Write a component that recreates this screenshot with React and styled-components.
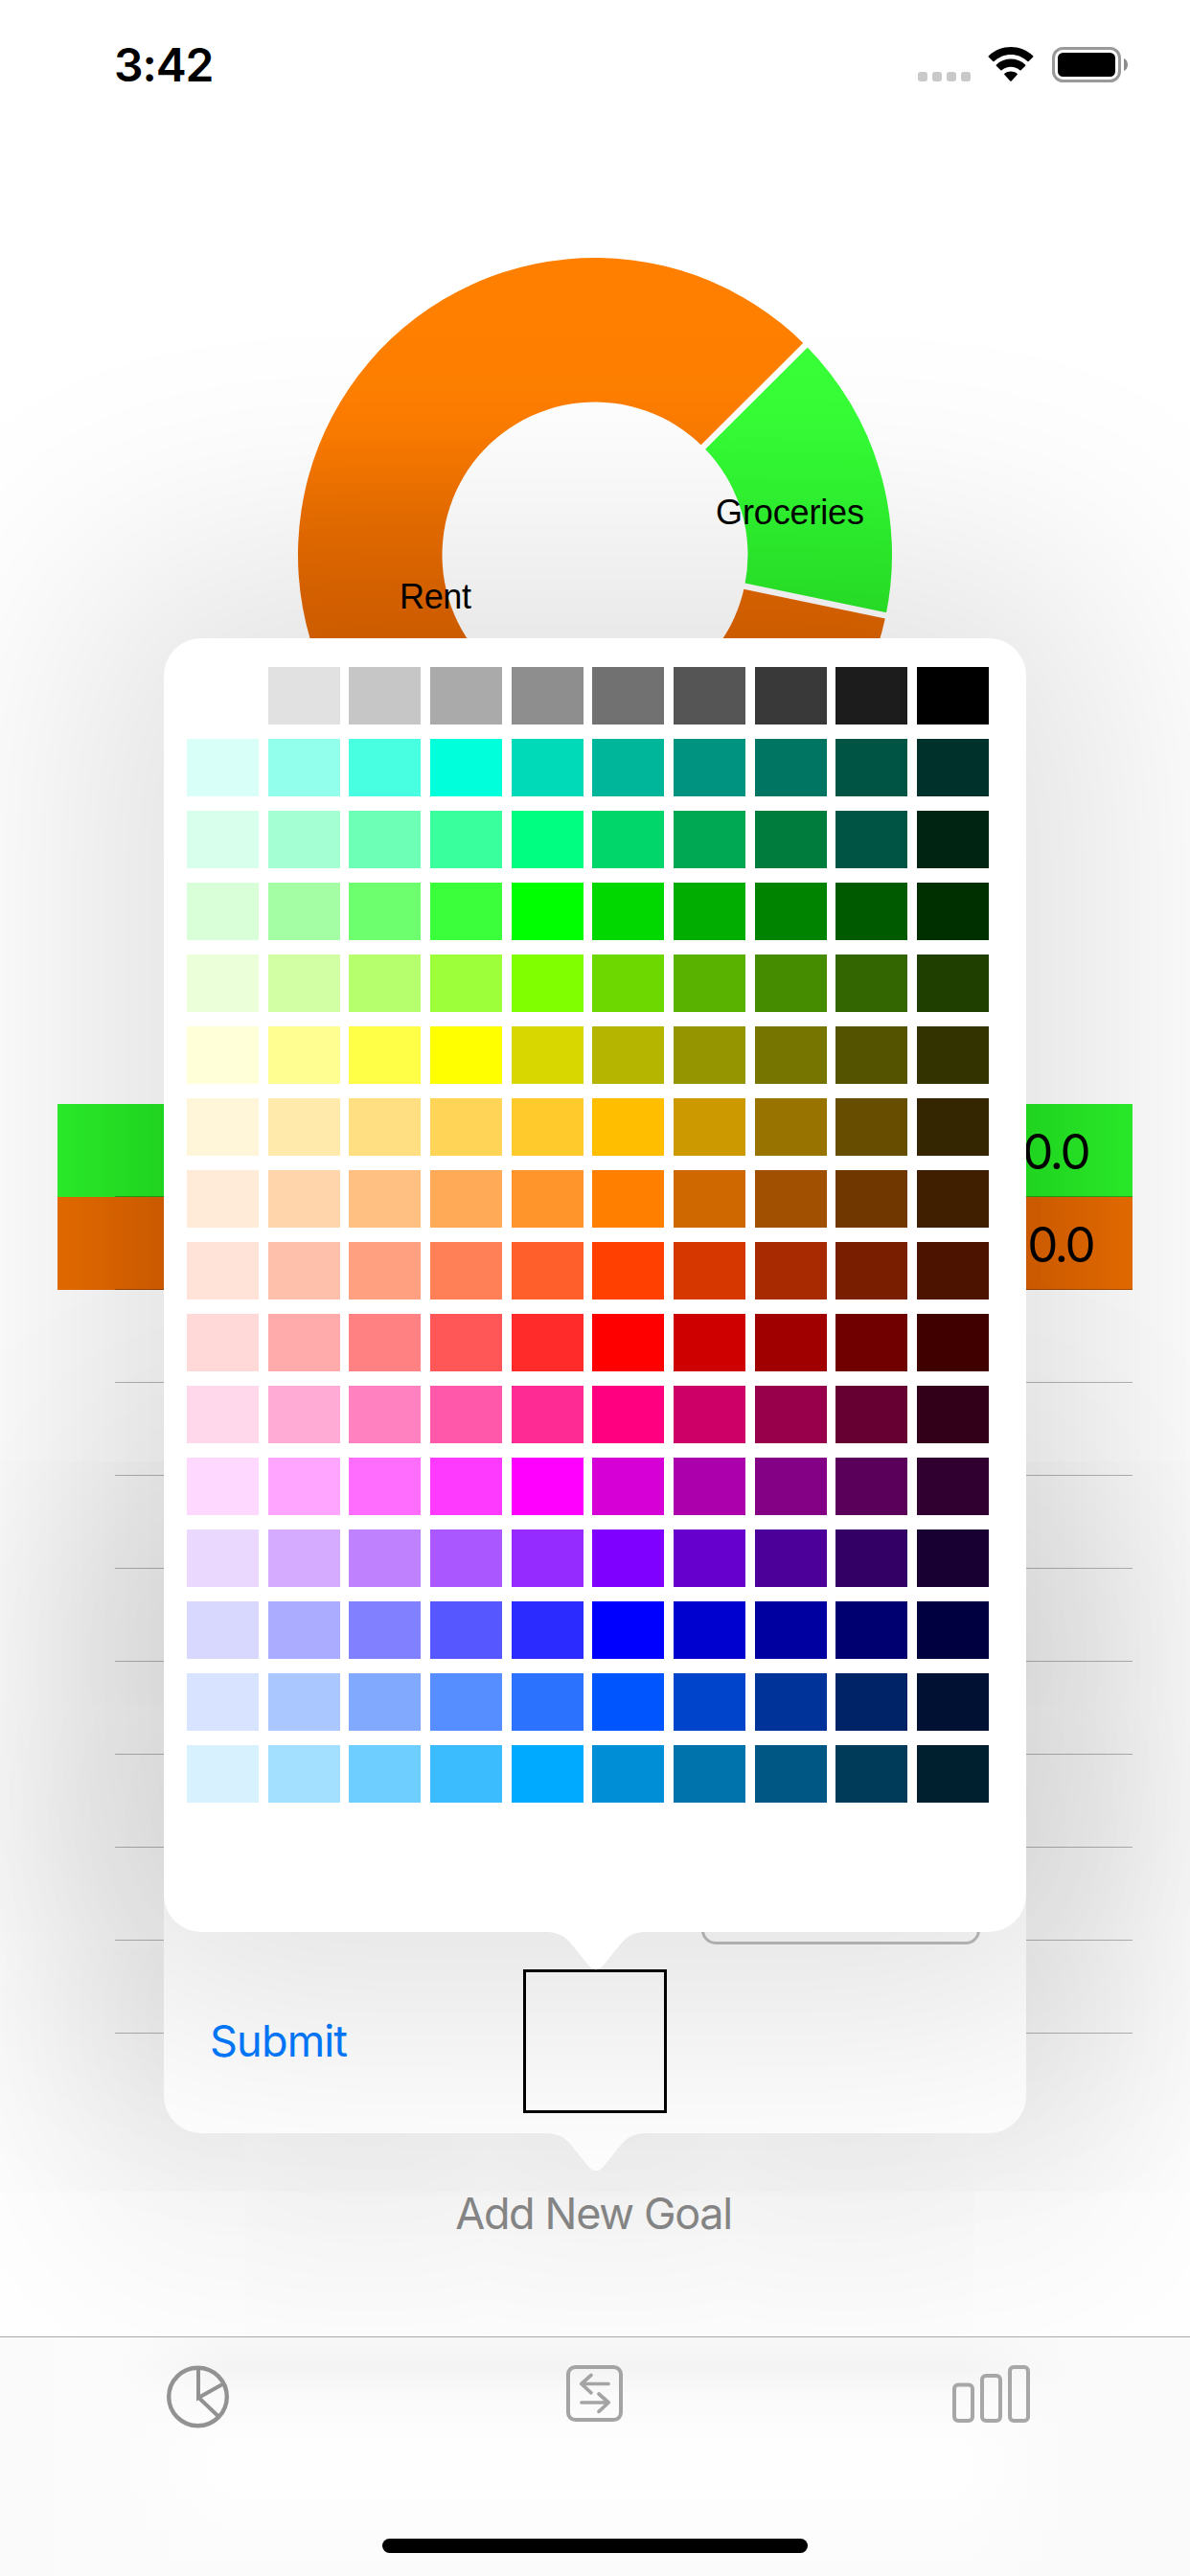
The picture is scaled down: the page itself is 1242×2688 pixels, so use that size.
import React from "react";
import styled, { createGlobalStyle } from "styled-components";

const GlobalStyle = createGlobalStyle`
  *, *::before, *::after { box-sizing: border-box; }
  html, body { margin: 0; padding: 0; background: #fff; }
`;

const Screen = styled.main`
  position: relative;
  display: flex;
  flex-direction: column;
  width: 1242px;
  height: 2688px;
  overflow: hidden;
  background: #fff;
  font-family: Inter, "Liberation Sans", sans-serif;
`;

/* Status bar */

const StatusBar = styled.header`
  display: flex;
  justify-content: space-between;
  height: 132px;
  padding: 0 65px 0 119px;
`;

const Clock = styled.time`
  padding-top: 38px;
  font-size: 48px;
  font-weight: 600;
  line-height: 60px;
  letter-spacing: -1.1px;
  color: #000;
`;

const StatusIcons = styled.div`
  display: flex;
  align-items: flex-start;
  padding-top: 49px;
`;

const SignalDots = styled.div`
  display: flex;
  gap: 5px;
  margin: 26px 18px 0 0;
`;

const Dot = styled.i`
  width: 10px;
  height: 10px;
  border-radius: 3px;
  background: #c9c9c9;
`;

const WifiSvg = styled.svg`
  display: block;
  width: 48px;
  height: 37px;
  margin-right: 19px;
`;

const BatterySvg = styled.svg`
  display: block;
  width: 79px;
  height: 37px;
`;

/* Chart */

const ChartArea = styled.section`
  height: 1020px;
  padding: 127px 0 0 301px;
`;

const ChartSvg = styled.svg`
  display: block;
  width: 640px;
  height: 640px;
`;

const SliceLabel = styled.text`
  font-family: "Liberation Sans", Arial, sans-serif;
  font-size: 36px;
  fill: #000;
`;

/* Goals table */

const Table = styled.ul`
  width: 1122px;
  margin: 0 0 0 60px;
  padding: 0;
  list-style: none;
`;

const Row = styled.li`
  display: flex;
  flex-direction: column;
  justify-content: flex-end;
  height: 97px;
  background: ${(p) =>
    p.$edge
      ? `linear-gradient(90deg, ${p.$edge} 0, ${p.$core} 111px, ${p.$core} calc(100% - 111px), ${p.$edge} 100%)`
      : "none"};
`;

const Amount = styled.span`
  align-self: flex-end;
  height: 96px;
  padding-right: ${(p) => p.$inset}px;
  font-size: 51px;
  line-height: 99px;
  letter-spacing: -2.6px;
  color: #000;
`;

const Separator = styled.span`
  height: 1px;
  margin-left: 60px;
  background: rgba(0, 0, 0, 0.28);
`;

const AddGoal = styled.button`
  align-self: center;
  margin: 158px 0 0 -3px;
  padding: 0;
  border: 0;
  background: none;
  font: inherit;
  font-size: 45px;
  line-height: 60px;
  letter-spacing: -1.35px;
  white-space: nowrap;
  color: #8b8b8b;
`;

/* Popovers */

const Popover = styled.section`
  position: absolute;
  left: 171px;
  top: ${(p) => p.$top}px;
  width: 900px;
  height: ${(p) => p.$height}px;
  border-radius: 39px;
  background: #fff;
  box-shadow: 0 0 260px 90px rgba(4, 4, 0, 0.115);
`;

const PopoverArrow = styled.svg`
  position: absolute;
  left: 399px;
  top: calc(100% - 0.5px);
  width: 104px;
  height: 40px;
`;

const Form = styled.div`
  display: flex;
  flex-direction: column;
  height: 100%;
  padding: 301px 48px 21px 48px;
`;

const AmountField = styled.input`
  align-self: flex-end;
  width: 291px;
  height: 102px;
  border: 3px solid #bebebe;
  border-radius: 15px;
  background: transparent;
`;

const FormActions = styled.div`
  display: grid;
  grid-template-columns: 327px 150px 1fr;
  align-items: center;
  height: 150px;
  margin-top: 26px;
`;

const SubmitButton = styled.button`
  justify-self: start;
  padding: 0;
  border: 0;
  background: none;
  font: inherit;
  font-size: 45px;
  line-height: 60px;
  letter-spacing: -0.8px;
  color: #007aff;
`;

const ColorWell = styled.div`
  width: 150px;
  height: 150px;
  border: 3px solid #000;
`;

const Palette = styled.div`
  display: grid;
  grid-template-columns: repeat(10, 75px);
  grid-auto-rows: 60px;
  gap: 15px 9.6667px;
  padding: 30px 24px;
`;

const Swatch = styled.div`
  background: ${(p) => p.$color};
`;

/* Tab bar */

const TabBar = styled.nav`
  position: absolute;
  left: 0;
  right: 0;
  bottom: 0;
  height: 250px;
  display: flex;
  flex-direction: column;
  border-top: 1px solid #a9a9a9;
  background:
    linear-gradient(90deg, #fafafa 0, #fbfbfb 120px, rgba(252, 252, 252, 0) 240px, rgba(252, 252, 252, 0) 1000px, #fafafa 1120px, #fafafa 100%),
    linear-gradient(180deg, #f7f7f7 0, #f4f4f4 33px, #fafafa 60px, #fefefe 110px, #fefefe 150px, #fbfbfb 100%);
`;

const Tabs = styled.div`
  display: grid;
  grid-template-columns: repeat(3, 414px);
  height: 147px;
  padding-top: 28px;
`;

const Tab = styled.a`
  display: flex;
  justify-content: center;
`;

const TabIcon = styled.svg`
  display: block;
  width: 86px;
  height: 68px;
  fill: none;
  stroke: ${(p) => p.$tone};
`;

const HomeIndicator = styled.div`
  width: 444px;
  height: 15px;
  margin: 63px 0 0 399px;
  border-radius: 7.5px;
  background: #000;
`;

const PALETTE = [
  "ffffff e1e1e1 c6c6c6 aaaaaa 8e8e8e 717171 555555 393939 1c1c1c 000000",
  "d8fff8 91ffec 48ffe2 00ffdb 00dab8 00b69a 009480 007561 005444 00312a",
  "d8ffeb a4ffd2 6dffb6 3aff9d 00ff80 00d66a 00a854 007d3d 005444 002412",
  "d8ffd8 a4ffa4 6dff6d 3aff3a 00ff00 00d800 00ad00 008400 005a00 003000",
  "ebffd8 d2ffa4 b6ff6d 9dff3a 80ff00 6cd800 59b200 458c00 336600 1f3f00",
  "ffffd8 ffff91 ffff48 ffff00 d8d800 b5b500 959500 757500 545400 333300",
  "fff5d8 ffeaab ffdf81 ffd457 ffca2b ffbf00 cc9900 997300 664d00 332600",
  "ffebd8 ffd5ab ffc081 ffaa57 ff952b ff8000 d06800 a05000 703800 401f00",
  "ffe2d8 ffc0ab ffa081 ff8057 ff602b ff4000 d63600 a82a00 7a1e00 4b1300",
  "ffd8d8 ffabab ff8181 ff5757 ff2b2b ff0000 cf0000 a00000 700000 400000",
  "ffd8eb ffabd5 ff81c0 ff57aa ff2b95 ff0080 cc0066 99004c 660033 330019",
  "ffd8ff ffa4ff ff6dff ff3aff ff00ff d600d6 ad00ad 840084 5a005a 300030",
  "ebd8ff d5abff c081ff aa57ff 952bff 8000ff 6600cc 4c0099 330066 190033",
  "d8d8ff ababff 8181ff 5757ff 2b2bff 0000ff 0000cf 0000a0 000070 000040",
  "d8e4ff abc7ff 81aaff 578eff 2b72ff 0055ff 0044cc 003399 002266 001133",
  "d8f1ff a3dfff 6dceff 3abcff 00aaff 008ed7 0073ad 005784 003c5a 002030",
].flatMap((row) => row.split(" "));

const CX = 320;
const CY = 320;
const OUTER = 310;
const INNER = 159.5;

const at = (r, deg) => {
  const a = (deg * Math.PI) / 180;
  return `${(CX + r * Math.cos(a)).toFixed(2)} ${(CY + r * Math.sin(a)).toFixed(2)}`;
};

const slice = (from, to) => {
  const large = to - from > 180 ? 1 : 0;
  return `M${at(OUTER, from)} A${OUTER} ${OUTER} 0 ${large} 1 ${at(OUTER, to)} L${at(INNER, to)} A${INNER} ${INNER} 0 ${large} 0 ${at(INNER, from)} Z`;
};

const SLICE_START = -44.9;
const SLICE_END = 11.8;

function Donut() {
  return (
    <ChartSvg viewBox="0 0 640 640">
      <defs>
        <linearGradient id="rent" gradientUnits="userSpaceOnUse" x1="0" y1="10" x2="0" y2="410">
          <stop offset="0" stopColor="#ff8000" />
          <stop offset="0.32" stopColor="#ff8000" />
          <stop offset="0.45" stopColor="#fd7c00" />
          <stop offset="0.67" stopColor="#ec6f00" />
          <stop offset="0.87" stopColor="#e36700" />
          <stop offset="1" stopColor="#e06500" />
        </linearGradient>
        <linearGradient id="groceries" gradientUnits="userSpaceOnUse" x1="0" y1="10" x2="0" y2="410">
          <stop offset="0" stopColor="#3aff3a" />
          <stop offset="0.4" stopColor="#37ff37" />
          <stop offset="0.67" stopColor="#2ff630" />
          <stop offset="1" stopColor="#28e826" />
        </linearGradient>
      </defs>
      <path d={slice(SLICE_END, 360 + SLICE_START)} fill="url(#rent)" />
      <path d={slice(SLICE_START, SLICE_END)} fill="url(#groceries)" />
      {[SLICE_START, SLICE_END].map((deg) => (
        <path key={deg} d={`M${at(INNER - 4, deg)} L${at(OUTER + 4, deg)}`} stroke="#fff" strokeWidth="6.4" />
      ))}
      <SliceLabel x="446" y="288" textLength="155">Groceries</SliceLabel>
      <SliceLabel x="116" y="376" textLength="75">Rent</SliceLabel>
    </ChartSvg>
  );
}

function Arrow() {
  return (
    <PopoverArrow viewBox="0 0 104 40">
      <path
        d="M0 0 C12 0.4 18 3.5 24 10 C31 18 37 26 42 32 C48 41.5 56 41.5 62 32 C67 26 73 18 80 10 C86 3.5 92 0.4 104 0 Z"
        fill="#fff"
      />
    </PopoverArrow>
  );
}

function Wifi() {
  return (
    <WifiSvg viewBox="0 0 48 37">
      <path d="M24 7.9 C30.5 7.9 36.7 10.5 41.4 15 Q42 15.6 42.6 15 L47.2 10.5 Q47.8 9.8 47.1 9.2 C34 -3 14 -3 0.9 9.2 Q0.2 9.8 0.8 10.5 L5.4 15 Q6 15.6 6.6 15 C11.3 10.5 17.5 7.9 24 7.9 Z" />
      <path d="M24 20.7 C27.5 20.7 30.8 22 33.4 24.2 Q34 24.8 34.6 24.2 L39.2 19.7 Q39.8 19 39.1 18.4 C30.6 10.6 17.4 10.6 8.9 18.4 Q8.2 19 8.8 19.7 L13.4 24.2 Q14 24.8 14.6 24.2 C17.2 22 20.5 20.7 24 20.7 Z" />
      <path d="M30.6 27.7 Q31.2 28.4 30.6 29.1 L24.7 35.4 Q24 36.1 23.3 35.4 L17.4 29.1 Q16.8 28.4 17.4 27.7 C21.2 24.8 26.8 24.8 30.6 27.7 Z" />
    </WifiSvg>
  );
}

function Battery() {
  return (
    <BatterySvg viewBox="0 0 79 37">
      <rect x="1.5" y="1.5" width="69" height="34" rx="10" fill="none" stroke="#999" strokeWidth="3" />
      <rect x="6" y="6" width="60" height="25" rx="5.5" fill="#000" />
      <path d="M75 12 C77.6 13.2 79 15.6 79 18.5 C79 21.4 77.6 23.8 75 25 Z" fill="#8c8c8c" />
    </BatterySvg>
  );
}

function PieTabIcon() {
  return (
    <TabIcon viewBox="0 0 86 68" $tone="#929292" strokeWidth="4.4">
      <circle cx="42.5" cy="34" r="30.3" />
      <path d="M43 4 V35 L69 20.5 M43 34.5 L64 54.5" strokeWidth="4" />
    </TabIcon>
  );
}

function TransferTabIcon() {
  return (
    <TabIcon viewBox="0 0 86 68" $tone="#a4a4a4" strokeWidth="4" strokeLinecap="round" strokeLinejoin="round">
      <rect x="15" y="3" width="55" height="55" rx="7.5" />
      <path d="M57 20.5 H28.8 M39 11.4 L28.8 20.5 L39 29.8 M29 40 H57.2 M47 31 L57.2 40 L47 49.4" strokeWidth="3.7" />
    </TabIcon>
  );
}

function BarsTabIcon() {
  return (
    <TabIcon viewBox="0 0 86 68" $tone="#a7a7a7" strokeWidth="4">
      <rect x="4" y="21.5" width="19" height="37.5" rx="4" />
      <rect x="33" y="12" width="19" height="47" rx="4" />
      <rect x="62" y="3" width="19" height="56" rx="4" />
    </TabIcon>
  );
}

export default function App() {
  return (
    <Screen>
      <GlobalStyle />
      <StatusBar>
        <Clock>3:42</Clock>
        <StatusIcons>
          <SignalDots>
            <Dot />
            <Dot />
            <Dot />
            <Dot />
          </SignalDots>
          <Wifi />
          <Battery />
        </StatusIcons>
      </StatusBar>

      <ChartArea>
        <Donut />
      </ChartArea>

      <Table>
        <Row $edge="#2cf42c" $core="#23e822">
          <Amount $inset={46}>0.0</Amount>
          <Separator />
        </Row>
        <Row $edge="#ec6e00" $core="#dd6200">
          <Amount $inset={41}>0.0</Amount>
          <Separator />
        </Row>
        {Array.from({ length: 8 }, (_, i) => (
          <Row key={i}>
            <Separator />
          </Row>
        ))}
      </Table>

      <AddGoal>Add New Goal</AddGoal>

      <Popover $top={1626} $height={600}>
        <Form>
          <AmountField />
          <FormActions>
            <SubmitButton>Submit</SubmitButton>
            <ColorWell />
          </FormActions>
        </Form>
        <Arrow />
      </Popover>

      <Popover $top={666} $height={1350}>
        <Palette>
          {PALETTE.map((hex, i) => (
            <Swatch key={i} $color={`#${hex}`} />
          ))}
        </Palette>
        <Arrow />
      </Popover>

      <TabBar>
        <Tabs>
          <Tab>
            <PieTabIcon />
          </Tab>
          <Tab>
            <TransferTabIcon />
          </Tab>
          <Tab>
            <BarsTabIcon />
          </Tab>
        </Tabs>
        <HomeIndicator />
      </TabBar>
    </Screen>
  );
}
